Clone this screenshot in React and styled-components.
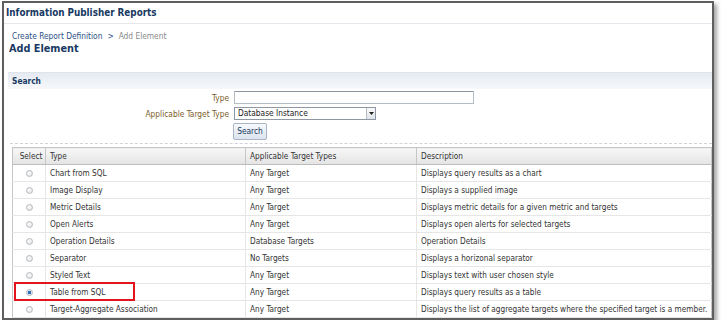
import React from "react";
import styled, { createGlobalStyle } from "styled-components";

const GlobalStyle = createGlobalStyle`
  html, body {
    margin: 0;
    padding: 0;
    background: #ffffff;
  }
  body {
    font-family: "DejaVu Sans Condensed", "DejaVu Sans", sans-serif;
    font-stretch: condensed;
  }
`;

const rows = [
  { type: "Chart from SQL", targets: "Any Target", desc: "Displays query results as a chart" },
  { type: "Image Display", targets: "Any Target", desc: "Displays a supplied image" },
  { type: "Metric Details", targets: "Any Target", desc: "Displays metric details for a given metric and targets" },
  { type: "Open Alerts", targets: "Any Target", desc: "Displays open alerts for selected targets" },
  { type: "Operation Details", targets: "Database Targets", desc: "Operation Details" },
  { type: "Separator", targets: "No Targets", desc: "Displays a horizonal separator" },
  { type: "Styled Text", targets: "Any Target", desc: "Displays text with user chosen style" },
  { type: "Table from SQL", targets: "Any Target", desc: "Displays query results as a table", selected: true },
  { type: "Target-Aggregate Association", targets: "Any Target", desc: "Displays the list of aggregate targets where the specified target is a member." },
];

export default function App() {
  return (
    <>
      <GlobalStyle />
      <Frame>
        <TitleBar>Information Publisher Reports</TitleBar>
        <Crumbs>
          <CrumbLink>Create Report Definition</CrumbLink>
          <CrumbSep>&gt;</CrumbSep>
          <CrumbCurrent>Add Element</CrumbCurrent>
        </Crumbs>
        <Heading>Add Element</Heading>

        <SearchBand>Search</SearchBand>
        <Form>
          <Label>Type</Label>
          <TextInput />
          <Label>Applicable Target Type</Label>
          <Select>
            <span>Database Instance</span>
            <DropButton>
              <svg width="5" height="3" viewBox="0 0 5 3">
                <path d="M0 0h5L2.5 3z" fill="#222" />
              </svg>
            </DropButton>
          </Select>
          <span />
          <Button>Search</Button>
        </Form>
        <Dashed />

        <Table>
          <colgroup>
            <col style={{ width: 33 }} />
            <col style={{ width: 200 }} />
            <col style={{ width: 171 }} />
            <col />
          </colgroup>
          <thead>
            <tr>
              <Th $center>Select</Th>
              <Th>Type</Th>
              <Th>Applicable Target Types</Th>
              <Th>Description</Th>
            </tr>
          </thead>
          <tbody>
            {rows.map((r) => (
              <tr key={r.type}>
                <SelectCell>
                  <Radio $on={r.selected} />
                  {r.selected && <Highlight />}
                </SelectCell>
                <Td>{r.type}</Td>
                <Td>{r.targets}</Td>
                <Td>{r.desc}</Td>
              </tr>
            ))}
          </tbody>
        </Table>
      </Frame>
    </>
  );
}

const Frame = styled.div`
  box-sizing: border-box;
  margin: 1px 0 0 2px;
  width: 712px;
  height: 319px;
  border: 2px solid #5e5e5e;
  box-shadow: 3px 3px 4px rgba(0, 0, 0, 0.35);
  background: #fff;
  display: flex;
  flex-direction: column;
  overflow: hidden;
`;

const TitleBar = styled.div`
  height: 20px;
  line-height: 19px;
  padding-left: 2px;
  border-bottom: 1px solid #e3e7ec;
  color: #183a62;
  font-weight: bold;
  font-size: 9.8px;
`;

const Crumbs = styled.div`
  display: flex;
  gap: 4px;
  margin-top: 6px;
  padding-left: 8px;
  height: 12px;
  line-height: 12px;
  font-size: 8.3px;
`;

const CrumbLink = styled.span`
  color: #2b4f86;
`;

const CrumbSep = styled.span`
  color: #2b4f86;
  margin: 0 1px;
`;

const CrumbCurrent = styled.span`
  color: #8a8a8a;
`;

const Heading = styled.div`
  padding-left: 5px;
  height: 14px;
  line-height: 14px;
  color: #183a62;
  font-weight: bold;
  font-size: 10.8px;
`;

const SearchBand = styled.div`
  margin: 16px 0 0 4px;
  height: 16px;
  line-height: 17px;
  padding-left: 4px;
  background: linear-gradient(#e6eaf1, #f6f8fb);
  border-top: 1px solid #dfe4ec;
  color: #183a62;
  font-weight: bold;
  font-size: 8.3px;
`;

const Form = styled.div`
  display: grid;
  grid-template-columns: 225px auto;
  column-gap: 5px;
  row-gap: 3px;
  align-items: center;
  justify-content: start;
  margin-top: 2px;
  font-size: 8.3px;
`;

const Label = styled.span`
  text-align: right;
  color: #7b5e2c;
`;

const TextInput = styled.div`
  box-sizing: border-box;
  width: 240px;
  height: 13px;
  border: 1px solid #b4bcc6;
  border-top-color: #8c96a2;
  background: #fff;
`;

const Select = styled.div`
  box-sizing: border-box;
  width: 142px;
  height: 13px;
  border: 1px solid #8e97a3;
  background: #fff;
  display: flex;
  align-items: center;
  justify-content: space-between;
  padding-left: 3px;
  color: #222;
  line-height: 11px;
`;

const DropButton = styled.span`
  box-sizing: border-box;
  width: 9px;
  height: 11px;
  border-left: 1px solid #b5bcc5;
  background: linear-gradient(#fafafa, #dfe3e8);
  display: flex;
  align-items: center;
  justify-content: center;
`;

const Button = styled.div`
  box-sizing: border-box;
  width: 34px;
  height: 17px;
  border: 1px solid #aab6c5;
  border-radius: 2px;
  background: linear-gradient(#f7f9fc, #dde4ee);
  color: #183a62;
  text-align: center;
  line-height: 15px;
  margin-left: -1px;
`;

const Dashed = styled.div`
  margin: 3px 0 0 6px;
  border-top: 1px dashed #cfd3d8;
`;

const Table = styled.table`
  margin: 3px 0 0 8px;
  width: 700px;
  border-collapse: collapse;
  table-layout: fixed;
  font-size: 8.2px;
  color: #333;
`;

const Th = styled.th`
  height: 16px;
  padding: 0 0 0 4px;
  text-align: ${(p) => (p.$center ? "center" : "left")};
  font-weight: normal;
  color: #333;
  background: linear-gradient(#f7f7f7, #e4e4e4);
  border: 1px solid #c6c6c6;
  border-bottom-color: #bdbdbd;
  white-space: nowrap;
`;

const Td = styled.td`
  height: 16px;
  padding: 0 0 0 4px;
  border: 1px solid #e6e6e6;
  border-left-color: #dcdcdc;
  white-space: nowrap;
  overflow: hidden;
  &:last-child {
    border-right-color: #c6c6c6;
  }
`;

const SelectCell = styled.td`
  position: relative;
  height: 16px;
  padding: 0;
  text-align: center;
  border: 1px solid #e6e6e6;
  border-left-color: #c6c6c6;
`;

const Radio = styled.span`
  display: inline-block;
  box-sizing: border-box;
  width: 7px;
  height: 7px;
  border-radius: 50%;
  vertical-align: middle;
  border: 1px solid #b9bcc0;
  background: ${(p) =>
    p.$on
      ? "radial-gradient(circle, #2f6fb8 0 1.6px, #dfe6ee 2px)"
      : "radial-gradient(circle at 40% 40%, #ffffff, #d8dadd)"};
`;

const Highlight = styled.span`
  position: absolute;
  left: 1px;
  top: -2px;
  width: 121px;
  height: 19px;
  box-sizing: border-box;
  border: 2px solid #e3141c;
  pointer-events: none;
`;
